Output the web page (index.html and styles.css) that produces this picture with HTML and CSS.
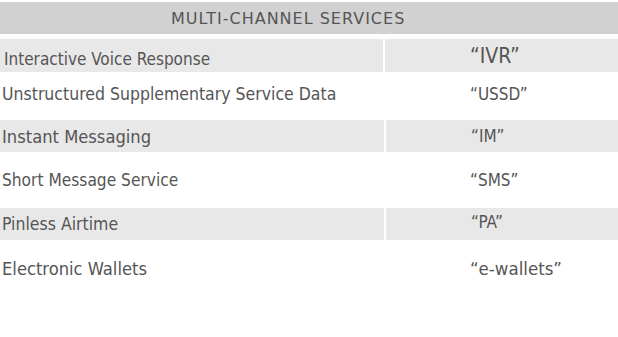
FILE: index.html
```html
<!DOCTYPE html>
<html>
<head>
<meta charset="utf-8">
<link rel="stylesheet" href="styles.css">
</head>
<body>
<div class="table">
  <div class="header">MULTI-CHANNEL SERVICES</div>
  <div class="row shaded r1">
    <div class="name">Interactive Voice Response</div>
    <div class="abbr big">“IVR”</div>
  </div>
  <div class="row r2">
    <div class="name">Unstructured Supplementary Service Data</div>
    <div class="abbr">“USSD”</div>
  </div>
  <div class="row shaded r3">
    <div class="name large">Instant Messaging</div>
    <div class="abbr">“IM”</div>
  </div>
  <div class="row r4">
    <div class="name">Short Message Service</div>
    <div class="abbr">“SMS”</div>
  </div>
  <div class="row shaded r5">
    <div class="name">Pinless Airtime</div>
    <div class="abbr">“PA”</div>
  </div>
  <div class="row r6">
    <div class="name">Electronic Wallets</div>
    <div class="abbr wide">“e-wallets”</div>
  </div>
</div>
</body>
</html>
```
FILE: styles.css
```css
html, body {
  margin: 0;
  padding: 0;
  background: #ffffff;
}
body {
  font-family: "DejaVu Sans Condensed", "DejaVu Sans", sans-serif;
  color: #555555;
}
.table {
  width: 618px;
  padding-top: 2px;
}
.header {
  height: 32px;
  box-sizing: border-box;
  padding-top: 2px;
  background: #d1d1d1;
  font-family: "DejaVu Sans", sans-serif;
  font-size: 16px;
  letter-spacing: 1px;
  line-height: 30px;
  padding-left: 171px;
  margin-bottom: 5px;
}
.row {
  display: flex;
  gap: 2px;
  align-items: stretch;
}
.row > div {
  display: flex;
  align-items: center;
  box-sizing: border-box;
}
.shaded > div {
  background: #e8e8e8;
}
.name {
  width: 383px;
  padding-left: 2px;
  font-size: 17.5px;
}
.abbr {
  flex: 1;
  padding-left: 85px;
  font-size: 17px;
}
.r1 { height: 33px; }
.r1 .name { padding-left: 4px; padding-top: 6px; font-size: 17px; }
.r2 { height: 48px; }
.r2 > div { padding-bottom: 4px; }
.r3 { height: 32px; }
.r3 .name { width: 384px; }
.r4 { height: 56px; }
.r4 .name { font-size: 17.2px; }
.r5 { height: 32px; }
.r5 .name { width: 384px; }
.r5 .abbr { padding-bottom: 4px; }
.r6 { height: 56px; }
.r6 .name { font-size: 18.2px; }
.large { font-size: 18.2px; }
.big { font-size: 21px; }
.wide { font-size: 18.5px; }
```
